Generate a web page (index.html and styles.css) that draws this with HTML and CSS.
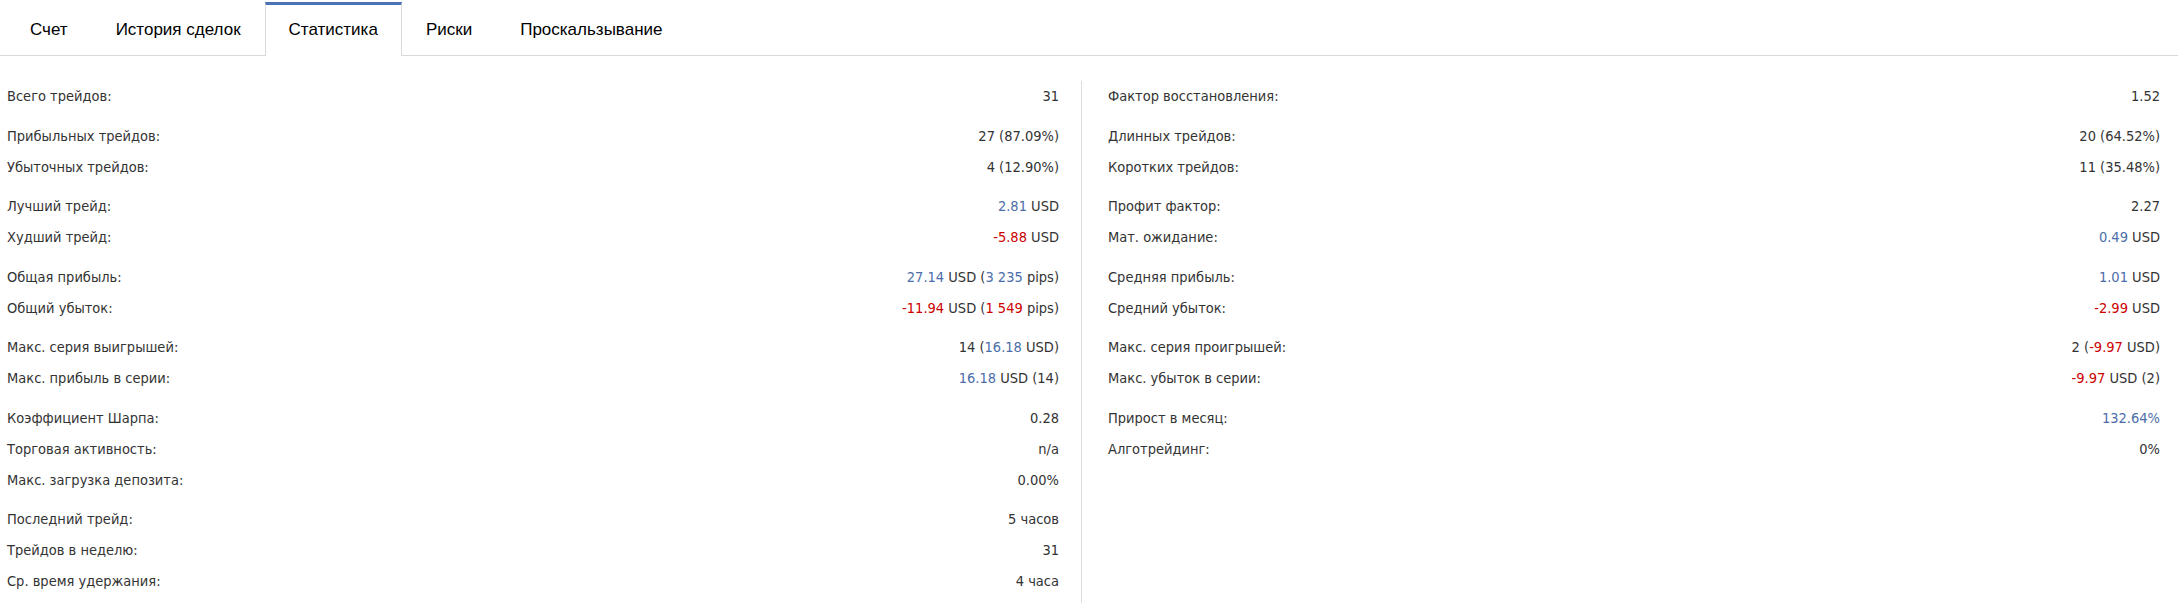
FILE: index.html
```html
<!DOCTYPE html>
<html lang="ru">
<head>
    <meta charset="UTF-8">
    <meta name="viewport" content="width=device-width, initial-scale=1.0">
    <title>Статистика сигнала</title>
    <link rel="stylesheet" href="styles.css">
</head>
<body>
    <!-- Вкладки -->
    <div class="tabs">
        <div class="tab">Счет</div>
        <div class="tab">История сделок</div>
        <div class="tab active">Статистика</div>
        <div class="tab">Риски</div>
        <div class="tab">Проскальзывание</div>
    </div>

    <!-- Статистика -->
    <div class="stats">
        <div class="stats-col left">
            <div class="group">
                <div class="row"><span class="label">Всего трейдов:</span><span class="value">31</span></div>
            </div>
            <div class="group">
                <div class="row"><span class="label">Прибыльных трейдов:</span><span class="value">27 (87.09%)</span></div>
                <div class="row"><span class="label">Убыточных трейдов:</span><span class="value">4 (12.90%)</span></div>
            </div>
            <div class="group">
                <div class="row"><span class="label">Лучший трейд:</span><span class="value"><span class="pos">2.81</span> USD</span></div>
                <div class="row"><span class="label">Худший трейд:</span><span class="value"><span class="neg">-5.88</span> USD</span></div>
            </div>
            <div class="group">
                <div class="row"><span class="label">Общая прибыль:</span><span class="value"><span class="pos">27.14</span> USD (<span class="pos">3 235</span> pips)</span></div>
                <div class="row"><span class="label">Общий убыток:</span><span class="value"><span class="neg">-11.94</span> USD (<span class="neg">1 549</span> pips)</span></div>
            </div>
            <div class="group">
                <div class="row"><span class="label">Макс. серия выигрышей:</span><span class="value">14 (<span class="pos">16.18</span> USD)</span></div>
                <div class="row"><span class="label">Макс. прибыль в серии:</span><span class="value"><span class="pos">16.18</span> USD (14)</span></div>
            </div>
            <div class="group">
                <div class="row"><span class="label">Коэффициент Шарпа:</span><span class="value">0.28</span></div>
                <div class="row"><span class="label">Торговая активность:</span><span class="value">n/a</span></div>
                <div class="row"><span class="label">Макс. загрузка депозита:</span><span class="value">0.00%</span></div>
            </div>
            <div class="group">
                <div class="row"><span class="label">Последний трейд:</span><span class="value">5 часов</span></div>
                <div class="row"><span class="label">Трейдов в неделю:</span><span class="value">31</span></div>
                <div class="row"><span class="label">Ср. время удержания:</span><span class="value">4 часа</span></div>
            </div>
        </div>

        <div class="stats-col right">
            <div class="group">
                <div class="row"><span class="label">Фактор восстановления:</span><span class="value">1.52</span></div>
            </div>
            <div class="group">
                <div class="row"><span class="label">Длинных трейдов:</span><span class="value">20 (64.52%)</span></div>
                <div class="row"><span class="label">Коротких трейдов:</span><span class="value">11 (35.48%)</span></div>
            </div>
            <div class="group">
                <div class="row"><span class="label">Профит фактор:</span><span class="value">2.27</span></div>
                <div class="row"><span class="label">Мат. ожидание:</span><span class="value"><span class="pos">0.49</span> USD</span></div>
            </div>
            <div class="group">
                <div class="row"><span class="label">Средняя прибыль:</span><span class="value"><span class="pos">1.01</span> USD</span></div>
                <div class="row"><span class="label">Средний убыток:</span><span class="value"><span class="neg">-2.99</span> USD</span></div>
            </div>
            <div class="group">
                <div class="row"><span class="label">Макс. серия проигрышей:</span><span class="value">2 (<span class="neg">-9.97</span> USD)</span></div>
                <div class="row"><span class="label">Макс. убыток в серии:</span><span class="value"><span class="neg">-9.97</span> USD (2)</span></div>
            </div>
            <div class="group">
                <div class="row"><span class="label">Прирост в месяц:</span><span class="value"><span class="pos">132.64%</span></span></div>
                <div class="row"><span class="label">Алготрейдинг:</span><span class="value">0%</span></div>
            </div>
        </div>
    </div>
</body>
</html>
```

FILE: styles.css
```css
* {
    margin: 0;
    padding: 0;
    box-sizing: border-box;
}

body {
    font-family: 'DejaVu Sans Condensed', 'DejaVu Sans', sans-serif;
    background-color: #fff;
    color: #333;
    overflow: hidden;
}

/* Вкладки */
.tabs {
    display: flex;
    padding: 2px 0 0 6px;
    border-bottom: 1px solid #d9d9d9;
    height: 56px;
}

.tab {
    font-family: 'Liberation Sans', Arial, sans-serif;
    font-size: 17px;
    color: #000;
    line-height: 50px;
    padding: 0 23px;
    border-top: 3px solid transparent;
    border-left: 1px solid transparent;
    border-right: 1px solid transparent;
    height: 54px;
    cursor: pointer;
}

.tab.active {
    border-top-color: #4a72b4;
    border-left-color: #d9d9d9;
    border-right-color: #d9d9d9;
    background: #fff;
}

/* Колонки статистики */
.stats {
    display: flex;
    margin-top: 25px;
    padding: 0 18px 0 7px;
}

.stats-col {
    flex: 1;
    font-size: 14.5px;
}

.stats-col.left {
    padding-right: 22px;
    border-right: 1px solid #ddd;
}

.stats-col.right {
    padding-left: 26px;
}

.group {
    margin-bottom: 8.5px;
}

.row {
    display: flex;
    justify-content: space-between;
    height: 31px;
    line-height: 31px;
}

.label {
    color: #333;
}

.value {
    color: #333;
    white-space: nowrap;
}

.pos {
    color: #4b6ea9;
}

.neg {
    color: #cc0000;
}
```
